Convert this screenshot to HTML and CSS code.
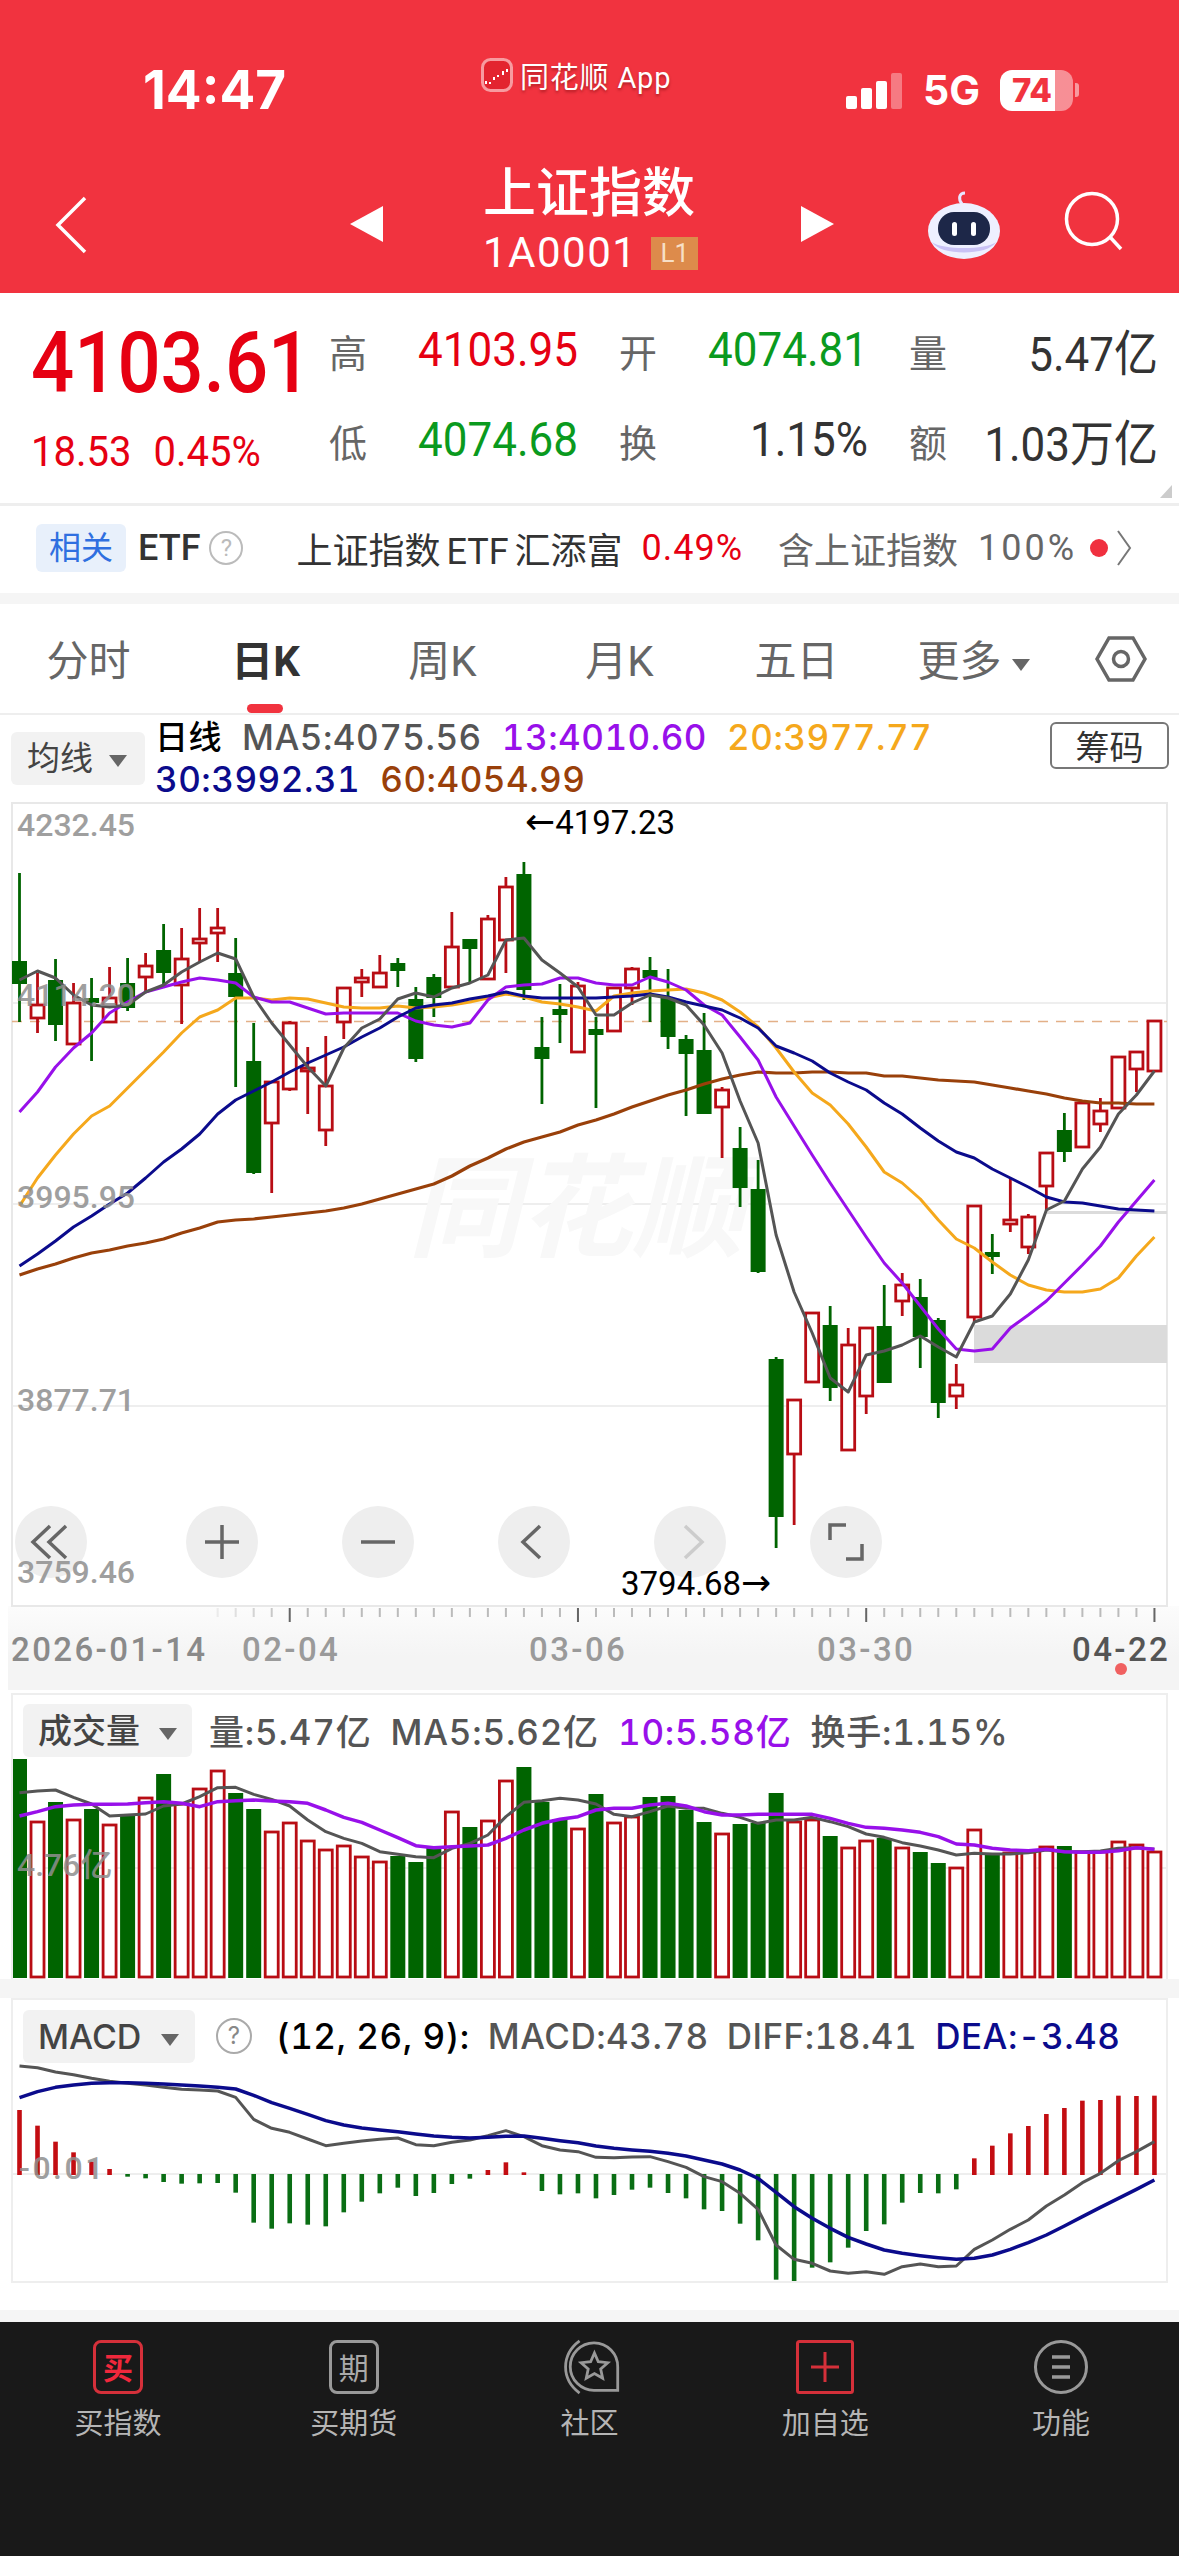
FILE: index.html
```html
<!DOCTYPE html>
<html lang="zh-CN">
<head>
  <meta charset="UTF-8">
  <title>上证指数</title>
  <link rel="stylesheet" href="styles.css">
</head>
<body>
  <header class="top">
    <div class="status">
      <span class="clock">14:47</span>
      <div class="app-pill">
        <svg class="app-logo" viewBox="0 0 32 34">
          <rect x="1.5" y="1.5" width="29" height="31" rx="8" fill="#e3242f" stroke="#f79ba0" stroke-width="3"/>
          <path d="M5 23v3M9 24v2M13 19v3M17 17v2M22 13v4M26 11v3" stroke="#fff" stroke-width="2" fill="none"/>
        </svg>
        <span class="app-name">同花顺 App</span>
      </div>
      <div class="status-right">
        <div class="signal">
          <i class="bar1"></i><i class="bar2"></i><i class="bar3"></i><i class="bar4"></i>
        </div>
        <span class="net">5G</span>
        <div class="battery"><span>74</span></div>
        <i class="battery-cap"></i>
      </div>
    </div>
    <div class="nav">
      <svg class="nav-back" viewBox="0 0 34 58"><path d="M31 2 4 29l27 27" fill="none" stroke="#fff" stroke-width="3.5"/></svg>
      <i class="tri-left"></i>
      <div class="title">
        <h1>上证指数</h1>
        <div class="code"><span>1A0001</span><b>L1</b></div>
      </div>
      <i class="tri-right"></i>
      <svg class="robot" viewBox="0 0 76 70">
        <path d="M36 14c-4-5-3-11 3-11" fill="none" stroke="#e8e6ff" stroke-width="3"/>
        <ellipse cx="38" cy="41" rx="36" ry="28" fill="#eef0ff"/>
        <path d="M6 52c8 14 56 14 64 0-10 8-54 8-64 0z" fill="#c9c2f5"/>
        <rect x="12" y="22" width="52" height="33" rx="16" fill="#1d2748"/>
        <rect x="26" y="32" width="5" height="14" rx="2.5" fill="#fff"/>
        <rect x="45" y="32" width="5" height="14" rx="2.5" fill="#fff"/>
      </svg>
      <svg class="search" viewBox="0 0 60 60"><circle cx="28" cy="28" r="25.5" fill="none" stroke="#fff" stroke-width="3.5"/><path d="M46 46l11 12" stroke="#fff" stroke-width="3.5"/></svg>
    </div>
  </header>

  <section class="quote">
    <div class="price">
      <div class="price-now">4103.61</div>
      <div class="price-change"><span>18.53</span><span>0.45%</span></div>
    </div>
    <div class="stats">
      <div class="stat"><label>高</label><span class="up">4103.95</span></div>
      <div class="stat"><label>开</label><span class="down">4074.81</span></div>
      <div class="stat"><label>量</label><span>5.47亿</span></div>
      <div class="stat"><label>低</label><span class="down">4074.68</span></div>
      <div class="stat"><label>换</label><span>1.15%</span></div>
      <div class="stat"><label>额</label><span>1.03万亿</span></div>
    </div>
  </section>

  <section class="etf">
    <span class="etf-tag">相关</span>
    <span class="etf-label">ETF</span>
    <i class="help">?</i>
    <span class="etf-name">上证指数 ETF 汇添富</span>
    <span class="etf-pct">0.49%</span>
    <span class="etf-hold">含上证指数</span>
    <span class="etf-hold etf-hold-num">100%</span>
    <i class="etf-dot"></i>
    <svg class="etf-more" viewBox="0 0 16 38"><path d="M2 2l12 17L2 36" fill="none" stroke="#777" stroke-width="2"/></svg>
  </section>

  <nav class="tabs">
    <a>分时</a>
    <a class="active">日K</a>
    <a>周K</a>
    <a>月K</a>
    <a>五日</a>
    <a>更多<i class="caret"></i></a>
    <svg class="tab-gear" viewBox="0 0 52 46"><path d="M14 2h24l12 21-12 21H14L2 23z" fill="none" stroke="#666" stroke-width="3.5"/><circle cx="26" cy="23" r="7.5" fill="none" stroke="#666" stroke-width="3.5"/></svg>
  </nav>

  <section class="kline">
    <div class="kline-head">
      <div class="chip chip-ma">均线<i class="caret"></i></div>
      <div class="legend">
        <div class="legend-row">
          <span class="c-black legend-name">日线</span>
          <span class="c-gray">MA5:4075.56</span>
          <span class="c-purple">13:4010.60</span>
          <span class="c-orange">20:3977.77</span>
        </div>
        <div class="legend-row">
          <span class="c-navy">30:3992.31</span>
          <span class="c-brown">60:4054.99</span>
        </div>
      </div>
      <button class="chips-btn">筹码</button>
    </div>
    <svg class="kline-chart" viewBox="0 802 1179 888">
      <defs>
        <linearGradient id="axisFade" x1="0" y1="0" x2="0" y2="1">
          <stop offset="0" stop-color="#fcfcfc"/>
          <stop offset="0.6" stop-color="#f4f4f4"/>
        </linearGradient>
      </defs>
      <rect x="8" y="1606" width="1171" height="84" fill="url(#axisFade)"/>
      <rect class="frame" x="12" y="803" width="1155" height="803"/>
      <path class="grid" d="M12 1003H1167M12 1204H1167M12 1406H1167"/>
      <path class="price-line" d="M12 1021.5H1167"/>
      <rect class="mark-block" x="974" y="1325" width="193" height="38"/>
      <rect class="mark-block" x="1047" y="1211" width="120" height="3"/>
      <text class="watermark" x="408" y="1248">同花顺</text>
      <g id="candles"></g>
      <g id="maLines"></g>
      <g class="tool">
        <circle cx="51" cy="1542" r="36"/>
        <path d="M50 1526l-17 16 17 16M66 1526l-17 16 17 16"/>
        <circle cx="222" cy="1542" r="36"/>
        <path d="M205 1542h34M222 1525v34"/>
        <circle cx="378" cy="1542" r="36"/>
        <path d="M361 1542h34"/>
        <circle cx="534" cy="1542" r="36"/>
        <path d="M540 1526l-17 16 17 16"/>
      </g>
      <g class="tool tool-off">
        <circle cx="690" cy="1542" r="36"/>
        <path d="M685 1526l17 16-17 16"/>
      </g>
      <g class="tool">
        <circle cx="846" cy="1542" r="36"/>
        <path d="M830 1540v-15h16M862 1544v15h-16"/>
      </g>
      <text class="axis-label" x="17" y="836">4232.45</text>
      <text class="axis-label" x="17" y="1006">4114.20</text>
      <text class="axis-label" x="17" y="1208">3995.95</text>
      <text class="axis-label" x="17" y="1411">3877.71</text>
      <text class="axis-label" x="17" y="1583">3759.46</text>
      <text class="extreme" x="525" y="834"><tspan class="arrow">←</tspan>4197.23</text>
      <text class="extreme" x="621" y="1595">3794.68<tspan class="arrow">→</tspan></text>
      <g id="ticks"></g>
      <text class="date" x="11" y="1661">2026-01-14</text>
      <text class="date date-lite" x="242" y="1661">02-04</text>
      <text class="date date-lite" x="529" y="1661">03-06</text>
      <text class="date date-lite" x="817" y="1661">03-30</text>
      <text class="date date-now" x="1072" y="1661">04-22</text>
      <circle class="now-dot" cx="1121" cy="1669" r="6"/>
    </svg>
  </section>

  <section class="panel panel-vol">
    <div class="panel-head">
      <div class="chip chip-vol">成交量<i class="caret"></i></div>
      <div class="panel-text">
        <span class="c-gray">量:5.47亿</span>
        <span class="c-gray">MA5:5.62亿</span>
        <span class="c-purple">10:5.58亿</span>
        <span class="c-gray">换手:1.15%</span>
      </div>
    </div>
    <svg class="vol-chart" viewBox="13 1757 1153 222">
      <path class="grid" d="M13 1868H1166"/>
      <g id="volBars"></g>
      <g id="volLines"></g>
      <text class="axis-label" x="17" y="1876">4.76亿</text>
    </svg>
  </section>
  <div class="gap"></div>

  <section class="panel panel-macd">
    <div class="panel-head">
      <div class="chip chip-macd">MACD<i class="caret"></i></div>
      <i class="help help-macd">?</i>
      <div class="panel-text">
        <span class="c-black">(12, 26, 9):</span>
        <span class="c-gray">MACD:43.78</span>
        <span class="c-gray">DIFF:18.41</span>
        <span class="c-navy">DEA:-3.48</span>
      </div>
    </div>
    <svg class="macd-chart" viewBox="13 2062 1153 219">
      <path class="grid" d="M13 2174H1166"/>
      <g id="macdBars"></g>
      <g id="macdLines"></g>
      <text class="axis-label axis-label-wide" x="19" y="2179">-0.01</text>
    </svg>
  </section>
  <div class="panel-foot"></div>
  <div class="gap gap-thin"></div>

  <footer class="bottom">
    <a class="bottom-item">
      <span class="bottom-icon bi-box bi-red">买</span>
      <span>买指数</span>
    </a>
    <a class="bottom-item">
      <span class="bottom-icon bi-box">期</span>
      <span>买期货</span>
    </a>
    <a class="bottom-item">
      <svg class="bottom-svg" viewBox="0 0 64 58">
        <path d="M21 1C1 16 1 42 21 57" fill="none" stroke="#999" stroke-width="3"/>
        <path d="M62 54H37a25.500 25.500 0 1 1 25-25z" fill="none" stroke="#999" stroke-width="3"/>
        <polygon points="37,14 41.100,23.300 51.300,24.400 43.700,31.200 45.800,41.100 37,36 28.200,41.100 30.300,31.200 22.700,24.400 32.900,23.300" fill="none" stroke="#999" stroke-width="3"/>
      </svg>
      <span>社区</span>
    </a>
    <a class="bottom-item">
      <svg class="bottom-svg" viewBox="0 0 58 54">
        <rect x="1.500" y="1.500" width="55" height="51" rx="2" fill="none" stroke="#d5303a" stroke-width="3"/>
        <path d="M29 12v30M15 27h28" stroke="#d5303a" stroke-width="3"/>
      </svg>
      <span>加自选</span>
    </a>
    <a class="bottom-item">
      <svg class="bottom-svg" viewBox="0 0 54 54">
        <circle cx="27" cy="27" r="25.500" fill="none" stroke="#999" stroke-width="3"/>
        <path d="M18 17h18M18 27h18M18 37h18" stroke="#999" stroke-width="3.500"/>
      </svg>
      <span>功能</span>
    </a>
  </footer>

  <script src="chart.js"></script>
</body>
</html>
```

FILE: styles.css
```css
* {
  box-sizing: border-box;
}

html, body {
  margin: 0;
  padding: 0;
}

body {
  width: 1179px;
  height: 2556px;
  overflow: hidden;
  background: #fff;
  color: #333;
  font-family: Roboto, "Noto Sans CJK SC", sans-serif;
}

i {
  font-style: normal;
}

/* red header */
.top {
  height: 293px;
  background: #f1333f;
  color: #fff;
}

.status {
  display: grid;
  grid-template-columns: 338px 365px 1fr;
  height: 130px;
  padding: 50px 0 0 143px;
  align-items: center;
}

.clock {
  font-family: Inter, sans-serif;
  font-size: 53px;
  font-weight: 700;
}

.app-pill {
  display: flex;
  align-items: center;
  gap: 7px;
  margin-top: -30px;
}

.app-logo {
  width: 32px;
  height: 34px;
}

.app-name {
  font-size: 29px;
  letter-spacing: 0.800px;
  text-shadow: 0 2px 3px rgba(90, 0, 0, 0.45);
  white-space: nowrap;
}

.status-right {
  display: flex;
  align-items: center;
}

.signal {
  display: flex;
  align-items: flex-end;
  gap: 4px;
  height: 37px;
}

.signal i {
  width: 11px;
  background: #fff;
  border-radius: 2px;
}

.bar1 { height: 13px; }
.bar2 { height: 21px; }
.bar3 { height: 28px; }
.bar4 { height: 36px; opacity: 0.35; }

.net {
  margin-left: 21px;
  font-family: Inter, sans-serif;
  font-size: 41px;
  font-weight: 700;
}

.battery {
  width: 73px;
  height: 41px;
  margin-left: 20px;
  border-radius: 12px;
  background: linear-gradient(to right, #fff 76%, rgba(255, 255, 255, 0.45) 76%);
  color: #f1333f;
  font-family: Inter, sans-serif;
  font-size: 33px;
  font-weight: 800;
  line-height: 41px;
  text-align: center;
}

.battery span {
  display: block;
  width: 64px;
}

.battery-cap {
  width: 4px;
  height: 14px;
  margin-left: 2px;
  border-radius: 0 3px 3px 0;
  background: rgba(255, 255, 255, 0.5);
}

.nav {
  display: flex;
  align-items: flex-start;
  height: 163px;
  padding-left: 54px;
}

.nav-back {
  width: 34px;
  height: 60px;
  margin-top: 65px;
}

.tri-left, .tri-right {
  width: 0;
  height: 0;
  margin-top: 76px;
  border-top: 18px solid transparent;
  border-bottom: 18px solid transparent;
}

.tri-left {
  margin-left: 262px;
  border-right: 33px solid #fff;
}

.tri-right {
  margin-left: 103px;
  border-left: 33px solid #fff;
}

.title {
  width: 215px;
  margin-left: 100px;
  padding-top: 33px;
}

.title h1 {
  margin: 0;
  font-size: 53px;
  font-weight: 500;
  line-height: 62px;
  white-space: nowrap;
}

.code {
  display: flex;
  align-items: center;
  gap: 14px;
  margin-top: 11px;
}

.code span {
  font-size: 42px;
  letter-spacing: 1.500px;
  line-height: 34px;
}

.code b {
  width: 49px;
  background: #dd8b4b;
  color: #f7dfc6;
  font-size: 26px;
  font-weight: 400;
  line-height: 33px;
  text-align: center;
}

.robot {
  width: 76px;
  height: 70px;
  margin: 60px 0 0 92px;
}

.search {
  width: 60px;
  height: 60px;
  margin: 61px 0 0 62px;
}

/* price block */
.quote {
  position: relative;
  display: flex;
  height: 210px;
  padding-left: 31px;
}

.quote::after {
  content: "";
  position: absolute;
  right: 7px;
  bottom: 5px;
  border-left: 12px solid transparent;
  border-bottom: 13px solid #ccc;
}

.price {
  width: 298px;
  padding-top: 28px;
}

.price-now {
  color: #e60012;
  font-size: 76px;
  font-weight: 500;
  line-height: 84px;
  white-space: nowrap;
  transform: scaleY(1.12);
}

.price-change {
  display: flex;
  gap: 22px;
  margin-top: 25px;
  color: #e60012;
  font-size: 40px;
  line-height: 44px;
  transform: scaleY(1.08);
}

.stats {
  display: grid;
  grid-template-columns: repeat(3, 249px);
  grid-auto-rows: 90px;
  column-gap: 41px;
  padding-top: 12px;
}

.stat {
  display: flex;
  justify-content: space-between;
  align-items: center;
  font-size: 44px;
  color: #333;
}

.stat span {
  transform: scaleY(1.1);
  white-space: nowrap;
}

.stat label {
  color: #666;
  font-size: 38px;
}

.up {
  color: #e60012;
}

.down {
  color: #0a9a1e;
}

/* ETF row */
.etf {
  display: flex;
  align-items: center;
  height: 90px;
  padding: 0 0 3px 36px;
  border-top: 3px solid #eee;
  font-size: 36px;
  white-space: nowrap;
}

.etf-tag {
  width: 90px;
  background: #e8f0fb;
  border-radius: 6px;
  color: #2f6fe0;
  font-size: 32px;
  line-height: 48px;
  text-align: center;
}

.etf-label {
  margin-left: 12px;
  font-weight: 500;
}

.help {
  display: block;
  width: 34px;
  height: 34px;
  margin-left: 9px;
  border: 2px solid #bbb;
  border-radius: 50%;
  color: #bbb;
  font-size: 24px;
  line-height: 30px;
  text-align: center;
}

.etf-name {
  margin-left: 53px;
  word-spacing: -3px;
}

.etf-pct {
  margin-left: 19px;
  color: #e60012;
  letter-spacing: 1px;
}

.etf-hold {
  margin-left: 35px;
  color: #666;
}

.etf-hold-num {
  margin-left: 20px;
  letter-spacing: 3px;
}

.etf-dot {
  width: 18px;
  height: 18px;
  margin-left: 13px;
  border-radius: 50%;
  background: #f0303f;
}

.etf-more {
  width: 16px;
  height: 38px;
  margin-left: 8px;
}

/* period tabs */
.tabs {
  display: grid;
  grid-template-columns: repeat(6, 177px) 1fr;
  align-items: center;
  height: 122px;
  border-top: 11px solid #f5f5f5;
  border-bottom: 2px solid #eee;
  font-size: 42px;
  color: #666;
  text-align: center;
}

.tabs a {
  position: relative;
  height: 109px;
  padding-top: 3px;
  line-height: 109px;
  white-space: nowrap;
}

.tabs .active {
  color: #333;
  font-weight: 700;
}

.tabs .active::after {
  content: "";
  position: absolute;
  left: 70px;
  bottom: 0;
  width: 36px;
  height: 9px;
  border-radius: 5px;
  background: #f1333f;
}

.caret {
  display: inline-block;
  margin-left: 10px;
  vertical-align: middle;
  border-left: 9px solid transparent;
  border-right: 9px solid transparent;
  border-top: 12px solid #666;
}

.tab-gear {
  width: 52px;
  height: 46px;
  justify-self: center;
}

/* kline */
.kline-head {
  display: flex;
  height: 87px;
  padding: 0 10px 0 11px;
  font-family: Inter, "Noto Sans CJK SC", sans-serif;
}

.chip {
  height: 53px;
  background: #f2f2f2;
  border-radius: 6px;
  color: #444;
  line-height: 53px;
  white-space: nowrap;
}

.chip-ma {
  width: 134px;
  margin-top: 17px;
  padding-left: 16px;
  font-size: 33px;
}

.chip-ma .caret {
  margin-left: 16px;
}

.legend {
  margin-left: 10px;
  padding-top: 1px;
  font-size: 35px;
  font-weight: 500;
}

.legend-row {
  display: flex;
  gap: 20px;
  height: 42px;
  line-height: 42px;
  white-space: nowrap;
  letter-spacing: 0.500px;
  font-variant-numeric: tabular-nums;
}

.legend-name {
  font-size: 33px;
}

.c-black { color: #000; }
.c-gray { color: #555; }
.c-purple { color: #9810ea; }
.c-orange { color: #f5a81c; }
.c-navy { color: #0b0b8c; }
.c-brown { color: #99400a; }

.chips-btn {
  width: 119px;
  height: 47px;
  margin: 7px 0 0 auto;
  padding: 0;
  background: #fff;
  border: 2px solid #777;
  border-radius: 6px;
  color: #333;
  font-family: "Noto Sans CJK SC", sans-serif;
  font-size: 34px;
  line-height: 42px;
}

.kline-chart {
  display: block;
  width: 1179px;
  height: 888px;
  overflow: visible;
}

.frame {
  fill: #fff;
  stroke: #e8e8e8;
  stroke-width: 2;
}

.grid {
  fill: none;
  stroke: #e9e9e9;
  stroke-width: 1.500;
}

.price-line {
  fill: none;
  stroke: #e3b088;
  stroke-width: 1.500;
  stroke-dasharray: 10 8;
}

.mark-block {
  fill: #dbdbdb;
}

.watermark {
  fill: #f8f8f8;
  font-family: "Noto Sans CJK SC", sans-serif;
  font-size: 112px;
  font-style: italic;
  font-weight: 700;
}

.tool circle {
  fill: #eee;
}

.tool path {
  fill: none;
  stroke: #666;
  stroke-width: 3.500;
}

.tool-off path {
  stroke: #ccc;
}

.axis-label {
  fill: #8f8f8f;
  font-family: Roboto, "Noto Sans CJK SC", sans-serif;
  font-size: 32px;
  font-weight: 500;
  opacity: 0.85;
}

.axis-label-wide {
  letter-spacing: 2.500px;
}

.extreme {
  fill: #000;
  font-family: Roboto, sans-serif;
  font-size: 33px;
}

.arrow {
  font-family: "DejaVu Sans", sans-serif;
  font-size: 36px;
}

.date {
  fill: #8a8a8a;
  font-family: Roboto, sans-serif;
  font-size: 33px;
  font-weight: 500;
  letter-spacing: 2.400px;
}

.date-lite {
  fill: #9a9a9a;
}

.date-now {
  fill: #555;
}

.now-dot {
  fill: #f06060;
}

/* volume and macd panels */
.panel {
  margin: 0 11px;
  border: 2px solid #eee;
  border-bottom: 0;
  font-family: Inter, "Noto Sans CJK SC", sans-serif;
}

.panel-vol {
  height: 286px;
  margin-top: 3px;
}

.panel-macd {
  height: 285px;
  border-bottom: 2px solid #eee;
}

.panel-head {
  display: flex;
  height: 62px;
  padding: 9px 0 0 10px;
}

.panel-macd .panel-head {
  padding-top: 10px;
}

.chip-vol {
  width: 169px;
  padding-left: 15px;
  font-size: 34px;
  font-weight: 500;
}

.chip-vol .caret {
  margin-left: 19px;
}

.chip-macd {
  width: 172px;
  padding-left: 15px;
  font-size: 34px;
  font-weight: 500;
}

.chip-macd .caret {
  margin-left: 20px;
}

.help-macd {
  width: 36px;
  height: 36px;
  margin: 8px 0 0 21px;
  color: #888;
  border-color: #aaa;
  line-height: 32px;
}

.panel-text {
  display: flex;
  gap: 19px;
  margin-left: 17px;
  padding-top: 2px;
  font-size: 35px;
  line-height: 53px;
  white-space: nowrap;
  letter-spacing: 0.800px;
  font-weight: 500;
  font-variant-numeric: tabular-nums;
}

.panel-macd .panel-text {
  gap: 18px;
  margin-left: 24px;
  padding-top: 0;
  letter-spacing: 0.500px;
}

.vol-chart, .macd-chart {
  display: block;
  width: 1153px;
}

.vol-chart {
  height: 222px;
}

.macd-chart {
  height: 219px;
}

.gap {
  height: 19px;
  background: #f5f5f5;
}

.gap-thin {
  height: 12px;
}

.panel-foot {
  height: 27px;
}

/* bottom bar */
.bottom {
  display: flex;
  height: 234px;
  background: #191919;
  color: #b5b5b5;
  font-family: "Noto Sans CJK SC", sans-serif;
  font-size: 29px;
}

.bottom-item {
  display: flex;
  flex: 1;
  flex-direction: column;
  align-items: center;
  padding-top: 18px;
}

.bottom-item > span:last-child {
  margin-top: 6px;
  line-height: 42px;
}

.bottom-icon, .bottom-svg {
  display: block;
  height: 54px;
}

.bi-box {
  width: 50px;
  border: 3px solid #999;
  border-radius: 8px;
  color: #aaa;
  font-size: 30px;
  line-height: 46px;
  text-align: center;
}

.bi-red {
  border-color: #d5303a;
  color: #f0283c;
  font-weight: 700;
}

.bottom-svg {
  overflow: visible;
}
```

FILE: chart.js
```js
const NS = 'http://www.w3.org/2000/svg';
const UP = '#b80d14';
const DOWN = '#006400';
const GRAY = '#555';
const PURPLE = '#9810ea';
const ORANGE = '#f5a81c';
const NAVY = '#0b0b8c';
const BROWN = '#99400a';

const xAt = (i) => 19.5 + 18.015 * i;

function el(parent, tag, attrs) {
  const node = document.createElementNS(NS, tag);
  for (const k in attrs) node.setAttribute(k, attrs[k]);
  parent.appendChild(node);
  return node;
}

function line(parent, ys, color, width) {
  const points = ys.map((y, i) => xAt(i).toFixed(1) + ',' + y).join(' ');
  el(parent, 'polyline', {
    points, fill: 'none', stroke: color,
    'stroke-width': width, 'stroke-linejoin': 'round'
  });
}

// type, high, body top, body bottom, low (all in page px)
const candles = [
  ['g', 873, 961, 984, 1022], ['r', 973, 1005, 1018, 1033], ['g', 959, 980, 1025, 1041],
  ['r', 983, 1003, 1044, 1044], ['g', 978, 998, 1003, 1061], ['r', 967, 998, 1022, 1023],
  ['g', 958, 983, 1008, 1011], ['r', 953, 966, 977, 992], ['g', 924, 950, 973, 985],
  ['r', 928, 959, 985, 1024], ['r', 908, 939, 943, 963], ['r', 908, 928, 933, 962],
  ['g', 938, 973, 997, 1087], ['g', 1023, 1061, 1173, 1174], ['r', 1082, 1082, 1123, 1193],
  ['r', 1021, 1023, 1089, 1091], ['r', 1047, 1068, 1071, 1114], ['r', 1036, 1086, 1130, 1146],
  ['r', 988, 988, 1022, 1039], ['r', 969, 978, 982, 997], ['r', 955, 973, 987, 988],
  ['g', 958, 963, 971, 987], ['g', 987, 999, 1059, 1062], ['g', 974, 977, 998, 1017],
  ['r', 912, 947, 987, 988], ['g', 939, 939, 949, 982], ['r', 915, 919, 979, 979],
  ['r', 877, 887, 940, 973], ['g', 862, 874, 990, 1000], ['g', 1017, 1047, 1059, 1104],
  ['g', 984, 1009, 1015, 1043], ['r', 982, 986, 1052, 1052], ['g', 1017, 1029, 1035, 1108],
  ['r', 988, 988, 1031, 1031], ['r', 967, 969, 988, 1005], ['g', 957, 970, 978, 1022],
  ['g', 969, 998, 1037, 1049], ['g', 1035, 1039, 1054, 1116], ['g', 1013, 1050, 1114, 1114],
  ['r', 1087, 1090, 1107, 1158], ['g', 1127, 1148, 1188, 1207], ['g', 1160, 1189, 1272, 1273],
  ['g', 1357, 1359, 1517, 1548], ['r', 1400, 1400, 1454, 1525], ['r', 1313, 1313, 1382, 1382],
  ['g', 1306, 1325, 1388, 1401], ['r', 1328, 1345, 1450, 1450], ['r', 1328, 1328, 1396, 1414],
  ['g', 1285, 1326, 1383, 1383], ['r', 1273, 1285, 1301, 1316], ['g', 1279, 1297, 1337, 1368],
  ['g', 1318, 1320, 1403, 1418], ['r', 1364, 1385, 1396, 1409], ['r', 1206, 1206, 1317, 1322],
  ['g', 1234, 1252, 1257, 1274], ['r', 1178, 1220, 1224, 1232], ['r', 1214, 1217, 1247, 1254],
  ['r', 1153, 1153, 1186, 1210], ['g', 1113, 1130, 1152, 1162], ['r', 1103, 1103, 1147, 1147],
  ['r', 1098, 1111, 1124, 1132], ['r', 1056, 1057, 1108, 1108], ['r', 1052, 1052, 1069, 1092],
  ['r', 1021, 1021, 1071, 1071]
];

const ma5 = [980, 971, 978, 995, 1005, 1007, 1005, 992, 985, 972, 962, 953, 959, 997, 1023, 1045,
  1067, 1086, 1048, 1028, 1019, 999, 993, 997, 988, 983, 975, 940, 938, 960, 973, 987, 1015, 1015,
  1003, 995, 998, 1005, 1025, 1053, 1101, 1143, 1235, 1292, 1333, 1378, 1392, 1355, 1351, 1345,
  1336, 1347, 1357, 1322, 1316, 1294, 1260, 1210, 1201, 1169, 1147, 1114, 1095, 1071];
const ma13 = [1112, 1092, 1067, 1048, 1033, 1013, 1002, 992, 987, 982, 978, 980, 983, 997, 1002,
  1002, 1008, 1014, 1013, 1013, 1013, 1013, 1021, 1025, 1027, 1023, 1000, 987, 985, 984, 978, 978,
  983, 985, 985, 977, 982, 990, 1005, 1015, 1037, 1060, 1097, 1126, 1155, 1183, 1210, 1237, 1263,
  1283, 1306, 1329, 1349, 1351, 1349, 1328, 1315, 1301, 1283, 1265, 1246, 1222, 1201, 1180];
const ma20 = [1206, 1178, 1155, 1134, 1116, 1106, 1088, 1070, 1052, 1033, 1017, 1010, 998, 998, 1000,
  998, 999, 1003, 1007, 1008, 1008, 1006, 1008, 1007, 1005, 1002, 998, 994, 997, 1002, 1004, 1007,
  1011, 996, 993, 991, 990, 989, 993, 1000, 1012, 1027, 1048, 1072, 1093, 1105, 1124, 1147, 1172,
  1183, 1199, 1220, 1239, 1248, 1262, 1275, 1285, 1290, 1292, 1292, 1289, 1278, 1256, 1237];
const ma30 = [1266, 1254, 1241, 1227, 1216, 1204, 1193, 1178, 1162, 1149, 1134, 1114, 1100, 1091,
  1082, 1072, 1063, 1055, 1047, 1037, 1028, 1017, 1008, 1005, 1003, 999, 996, 992, 996, 998, 998,
  998, 998, 997, 996, 994, 997, 1002, 1006, 1010, 1018, 1028, 1046, 1053, 1061, 1073, 1082, 1090,
  1103, 1114, 1128, 1141, 1152, 1158, 1169, 1178, 1187, 1197, 1202, 1203, 1206, 1209, 1210, 1211];
const ma60 = [1275, 1269, 1264, 1258, 1253, 1250, 1246, 1243, 1239, 1233, 1228, 1222, 1220, 1219,
  1217, 1215, 1213, 1211, 1208, 1204, 1199, 1194, 1189, 1184, 1176, 1166, 1158, 1149, 1142, 1137,
  1132, 1125, 1120, 1114, 1107, 1101, 1095, 1090, 1084, 1079, 1075, 1072, 1073, 1073, 1072, 1072,
  1073, 1073, 1076, 1076, 1078, 1080, 1081, 1082, 1085, 1088, 1091, 1094, 1098, 1101, 1103, 1103,
  1104, 1104];

// volume: page y of each bar top
const volTop = [1759, 1822, 1802, 1820, 1809, 1825, 1815, 1798, 1774, 1804, 1789, 1771, 1793, 1809,
  1832, 1823, 1841, 1850, 1846, 1857, 1862, 1856, 1862, 1848, 1812, 1827, 1821, 1781, 1767, 1802,
  1819, 1829, 1794, 1823, 1817, 1797, 1796, 1810, 1822, 1834, 1824, 1823, 1793, 1822, 1820, 1836,
  1848, 1841, 1838, 1848, 1852, 1863, 1868, 1830, 1855, 1853, 1852, 1847, 1846, 1852, 1852, 1842,
  1845, 1852];
const volTypes = ['g', 'r', 'g', 'r', 'g', 'r', 'g', 'r', 'g', 'r', 'r', 'r', 'g', 'g', 'r', 'r',
  'r', 'r', 'r', 'r', 'r', 'g', 'g', 'g', 'r', 'g', 'r', 'r', 'g', 'g', 'g', 'r', 'g', 'r', 'r',
  'g', 'g', 'g', 'g', 'r', 'g', 'g', 'g', 'r', 'r', 'g', 'r', 'r', 'g', 'r', 'g', 'g', 'r', 'r',
  'g', 'r', 'r', 'r', 'g', 'r', 'r', 'r', 'r', 'r'];
const volMa5 = [338, 333, 330, 352, 372, 408, 405, 402, 378, 372, 350, 323, 322, 343, 358, 378, 420,
  455, 475, 490, 515, 523, 530, 533, 505, 490, 465, 410, 367, 362, 355, 360, 372, 403, 410, 395,
  378, 385, 385, 400, 412, 430, 420, 420, 412, 425, 440, 462, 472, 488, 498, 510, 525, 520, 522,
  522, 518, 510, 515, 515, 513, 505, 503, 508].map((v) => 1680 + v / 3);
const volMa10 = [408, 395, 380, 375, 373, 373, 372, 368, 365, 370, 380, 365, 362, 360, 363, 365, 370,
  390, 412, 427, 450, 473, 497, 503, 500, 498, 495, 475, 450, 430, 418, 410, 390, 385, 385, 375,
  370, 378, 395, 405, 405, 403, 403, 403, 403, 415, 430, 442, 445, 450, 457, 470, 492, 495, 505,
  510, 512, 508, 515, 517, 517, 512, 503, 508].map((v) => 1680 + v / 3);

// macd: bar tips, positive above the zero line at y = 2174
const macdTips = [360, 407, 455, 487, 515, 537, 557, 562, 573, 578, 577, 576, 605, 695, 713, 697,
  701, 706, 664, 632, 607, 590, 615, 606, 579, 563, 540, 517, 547, 600, 610, 607, 622, 612, 596,
  590, 606, 622, 655, 660, 698, 748, 866, 878, 830, 814, 770, 720, 700, 635, 606, 607, 595, 505,
  467, 430, 408, 372, 354, 332, 330, 317, 318, 317].map((v) => 1990 + v / 3);
const diff = [228, 233, 246, 254, 265, 274, 280, 285, 292, 298, 300, 303, 322, 388, 415, 427, 447,
  467, 460, 453, 448, 444, 464, 467, 457, 450, 437, 422, 440, 467, 480, 485, 502, 503, 501, 500,
  515, 532, 560, 575, 610, 658, 765, 808, 820, 843, 850, 845, 853, 830, 822, 830, 828, 778, 750,
  718, 690, 648, 615, 578, 550, 512, 485, 455].map((v) => 1990 + v / 3);
const dea = [323, 305, 292, 285, 280, 278, 278, 280, 282, 285, 288, 292, 297, 316, 338, 355, 373,
  392, 405, 414, 420, 425, 432, 438, 442, 444, 442, 439, 438, 445, 452, 458, 468, 475, 480, 484,
  490, 498, 510, 522, 540, 565, 607, 650, 685, 715, 742, 762, 780, 790, 797, 803, 808, 805, 795,
  778, 758, 735, 708, 680, 652, 625, 598, 570].map((v) => 1990 + v / 3);

// candles
const candleGroup = document.getElementById('candles');
candles.forEach(([type, high, top, bottom, low], i) => {
  const x = xAt(i);
  const color = type === 'r' ? UP : DOWN;
  el(candleGroup, 'path', {
    d: `M${x} ${high}V${top}M${x} ${bottom}V${low}`,
    stroke: color, 'stroke-width': 2.8, fill: 'none'
  });
  if (type === 'r') {
    el(candleGroup, 'rect', {
      x: x - 6.5, y: top, width: 13, height: bottom - top,
      fill: '#fff', stroke: color, 'stroke-width': 2.8
    });
  } else {
    el(candleGroup, 'rect', { x: x - 7.5, y: top, width: 15, height: bottom - top, fill: color });
  }
});

const maGroup = document.getElementById('maLines');
line(maGroup, ma60, BROWN, 3.2);
line(maGroup, ma20, ORANGE, 3);
line(maGroup, ma13, PURPLE, 3);
line(maGroup, ma30, NAVY, 3);
line(maGroup, ma5, GRAY, 3);

// time axis ticks
const tickGroup = document.getElementById('ticks');
const majors = [15, 31, 47, 63];
for (let i = 11; i < 64; i++) {
  const major = majors.includes(i);
  const fade = i < 15 ? 0.25 + (i - 11) * 0.18 : 1;
  el(tickGroup, 'rect', {
    x: xAt(i) - 1, y: 1608, width: 2, height: major ? 14 : 9,
    fill: major ? '#666' : '#bbb', opacity: fade
  });
}

// volume
const volGroup = document.getElementById('volBars');
volTop.forEach((top, i) => {
  const x = xAt(i);
  if (volTypes[i] === 'r') {
    el(volGroup, 'rect', {
      x: x - 6.5, y: top, width: 13, height: 1977 - top,
      fill: '#fff', stroke: UP, 'stroke-width': 2.8
    });
  } else {
    el(volGroup, 'rect', { x: x - 7.5, y: top, width: 15, height: 1978 - top, fill: DOWN });
  }
});
const volLines = document.getElementById('volLines');
line(volLines, volMa5, GRAY, 3);
line(volLines, volMa10, PURPLE, 3.5);

// macd
const macdGroup = document.getElementById('macdBars');
macdTips.forEach((tip, i) => {
  const red = tip < 2174;
  el(macdGroup, 'rect', {
    x: xAt(i) - 2.3, y: red ? tip : 2174, width: 4.6, height: Math.abs(tip - 2174) + 1,
    fill: red ? '#c30d12' : '#0a6e14'
  });
});
const macdLines = document.getElementById('macdLines');
line(macdLines, diff, GRAY, 3);
line(macdLines, dea, NAVY, 3.5);
```
